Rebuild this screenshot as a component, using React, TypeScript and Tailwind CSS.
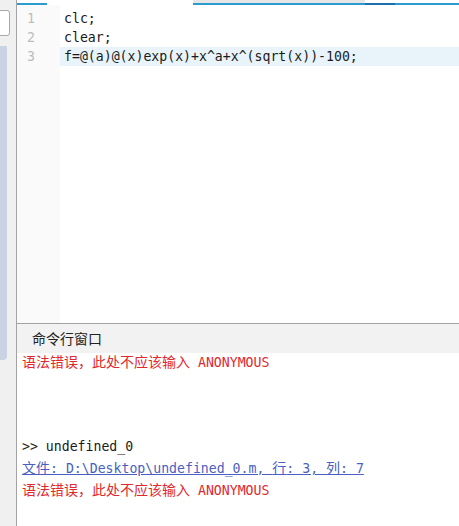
const mono = { fontFamily: '"DejaVu Sans Mono", "Noto Sans CJK SC", monospace' };

const code = ["clc;", "clear;", "f=@(a)@(x)exp(x)+x^a+x^(sqrt(x))-100;"];

function Cjk({ children }: { children: string }) {
  return (
    <span className="text-[14px]" style={{ fontFamily: '"Noto Sans CJK SC", sans-serif' }}>
      {children}
    </span>
  );
}

export default function App() {
  return (
    <div className="flex h-[526px] w-[459px] overflow-hidden bg-white" style={mono}>
      {/* left strip */}
      <div className="relative w-[16px] shrink-0 bg-[#f0f0f0]">
        <div className="absolute left-[-2px] top-[10px] h-[26px] w-[12px] rounded-r-[3px] border border-[#a9a9a9] bg-white" />
        <div className="absolute left-0 top-[46px] h-[314px] w-[7px] rounded-br-[4px] bg-[#c9d3e3]" />
      </div>
      <div className="w-px shrink-0 bg-[#a3a3a3]" />

      <div className="flex min-w-0 flex-1 flex-col">
        {/* tab strip remnant */}
        <div className="flex h-[5px] shrink-0">
          <div className="w-[30px] border-b-2 border-[#2b9bd0]" />
          <div className="w-[146px]" />
          <div className="w-[172px] border-b-2 border-[#2b9bd0] bg-[#e6e6e6]" />
          <div className="w-[30px] border-b-2 border-[#1e6fb0]" />
          <div className="flex-1 border-b-2 border-[#2b9bd0]" />
        </div>

        {/* editor */}
        <div className="flex h-[318px] shrink-0">
          <div className="w-[43px] shrink-0 bg-[#fafafa] pt-[4px] text-[13.2px] leading-[19px] text-[#bdbdbd]">
            {code.map((_, i) => (
              <div key={i} className="pl-[10px]">{i + 1}</div>
            ))}
          </div>
          <div className="flex-1 pt-[4px] text-[13.2px] leading-[19px] text-[#1a1a1a]">
            {code.map((l, i) => (
              <div key={i} className={`pl-[4px] ${i === 2 ? "bg-[#e8f4fa]" : ""}`}>{l}</div>
            ))}
          </div>
        </div>

        {/* command window */}
        <div className="h-px shrink-0 bg-[#a3a3a3]" />
        <div className="flex h-[29px] shrink-0 items-center bg-[#f2f2f2] pl-[15px] text-[14px] text-[#222]" style={{ fontFamily: '"Noto Sans CJK SC", sans-serif' }}>
          命令行窗口
        </div>
        <div className="flex-1 pl-[5px] pt-[-2px] text-[13.2px] leading-[20px]">
          <div className="-mt-[2px] text-[#e0282e]">
            <Cjk>语法错误，此处不应该输入</Cjk> ANONYMOUS
          </div>
          <div className="h-[64px]" />
          <div className="text-[#1a1a1a]">&gt;&gt; undefined_0</div>
          <div className="text-[#4a5fc1] underline">
            <Cjk>文件</Cjk>: D:\Desktop\undefined_0.m, <Cjk>行</Cjk>: 3, <Cjk>列</Cjk>: 7
          </div>
          <div className="text-[#e0282e]">
            <Cjk>语法错误，此处不应该输入</Cjk> ANONYMOUS
          </div>
        </div>
      </div>
    </div>
  );
}
